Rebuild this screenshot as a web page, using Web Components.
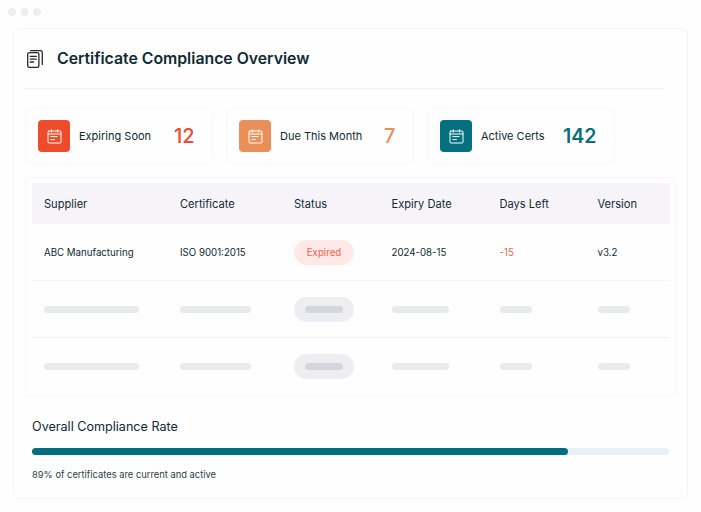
<!DOCTYPE html>
<html>
<head>
<meta charset="utf-8">
<title>Certificate Compliance Overview</title>
<style>
  html, body { margin: 0; background: #fefefe; }
  body { font-family: Inter, "Liberation Sans", sans-serif; color: #0f2a33; }
</style>
</head>
<body>

<app-window>
  <cert-heading>Certificate Compliance Overview</cert-heading>
  <stat-row>
    <stat-card value="12" color="#ee4b2b">Expiring Soon</stat-card>
    <stat-card value="7" color="#ea8f57">Due This Month</stat-card>
    <stat-card value="142" color="#04707f" strong>Active Certs</stat-card>
  </stat-row>
  <cert-table>
    <data-row supplier="ABC Manufacturing" cert="ISO 9001:2015" status="Expired" expiry="2024-08-15" days="-15" version="v3.2"></data-row>
    <skeleton-row></skeleton-row>
    <skeleton-row last></skeleton-row>
  </cert-table>
  <compliance-bar percent="84.2" title="Overall Compliance Rate">89% of certificates are current and active</compliance-bar>
</app-window>

<script>
// column widths shared by the header and all rows
const COLUMNS = "136px 114px 97.5px 108px 98px 1fr";

//outer frame with the three dots and the big card
class AppWindow extends HTMLElement {
  constructor() {
    super();
    this.attachShadow({ mode: "open" });
    this.shadowRoot.innerHTML = `
    <style>
      :host { display: block; width: 701px; height: 512px; box-sizing: border-box; padding: 8px 13px 13px 8px; overflow: hidden; }
      .dots { display: flex; gap: 5px; height: 20px; }
      .dots i { width: 7.5px; height: 7.5px; border-radius: 50%; background: #eeeef0; }
      .card { box-sizing: border-box; height: 471px; margin-left: 5px; border: 1px solid #f6f4f8; border-radius: 6px; background: #fefefe; padding: 0 11px; }
    </style>
    <div class="dots"><i></i><i></i><i></i></div>
    <div class="card"><slot></slot></div>`;
  }
}

class CertHeading extends HTMLElement {
  constructor() {
    super();
    this.attachShadow({ mode: "open" });
    this.shadowRoot.innerHTML = `
    <style>
      :host { display: flex; align-items: center; gap: 14px; height: 60px; margin-right: 12px; padding: 0 0 0 2px; box-sizing: border-box; border-bottom: 1px solid #f1f0f4; font-size: 15.8px; font-weight: 600; color: #0f2a33; }
      svg { width: 16px; height: 18px; }
    </style>
    <svg viewBox="0 0 16 18" fill="none" stroke="#2a2a2a" stroke-width="1.3" stroke-linecap="round" stroke-linejoin="round">
      <rect x=".7" y="2.6" width="11.2" height="14.7" rx="1.6"/>
      <path d="M3.6 .7h10c1 0 1.7.7 1.7 1.7v12"/>
      <path d="M3.3 6.4h6M3.3 9.2h6M3.3 12h3.4"/>
    </svg>
    <span><slot></slot></span>`;
  }
}

class StatRow extends HTMLElement {
  constructor() {
    super();
    this.attachShadow({ mode: "open" });
    this.shadowRoot.innerHTML = `
    <style>:host { display: flex; gap: 13px; margin-top: 19px; }</style>
    <slot></slot>`;
  }
}

class StatCard extends HTMLElement {
  constructor() {
    super();
    this.attachShadow({ mode: "open" });
    const color = this.getAttribute("color");
    const strong = this.hasAttribute("strong");
    this.shadowRoot.innerHTML = `
    <style>
      :host { display: flex; align-items: center; box-sizing: border-box; width: 188px; height: 56px; padding: 0 17.5px 0 12px; border: 1px solid #f8f6fb; border-radius: 6px; }
      .icon { display: flex; align-items: center; justify-content: center; width: 32px; height: 32px; border-radius: 4px; background: ${color}; flex: none; }
      .label { margin-left: 9px; font-size: 11px; color: #0f2a33; white-space: nowrap; }
      .value { margin-left: auto; font-size: ${strong ? 19.5 : 20}px; font-weight: ${strong ? 600 : 500}; color: ${color}; }
    </style>
    <div class="icon">
      <svg width="15" height="15" viewBox="0 0 15 15" fill="none" stroke="#fff" stroke-width="1" stroke-linecap="round">
        <rect x="1" y="2" width="13" height="12" rx="1"/>
        <path d="M1 5h13M4.4 .8v2.4M10.6 .8v2.4M3.8 7.6h6.4M3.8 10.6h3.6"/>
      </svg>
    </div>
    <span class="label"><slot></slot></span>
    <span class="value">${this.getAttribute("value")}</span>`;
  }
}

class CertTable extends HTMLElement {
  constructor() {
    super();
    this.attachShadow({ mode: "open" });
    this.shadowRoot.innerHTML = `
    <style>
      :host { display: block; box-sizing: border-box; width: 651px; height: 220px; margin-top: 13px; padding: 5px 5px 0 6px; border: 1px solid #f8f6fb; border-radius: 4px; }
      .head { display: grid; grid-template-columns: ${COLUMNS}; align-items: center; height: 41px; padding-left: 12px; background: #f7f4f9; font-size: 11.1px; font-weight: 400; color: #0f2a33; }
    </style>
    <div class="head">
      <span>Supplier</span><span>Certificate</span><span>Status</span><span>Expiry Date</span><span>Days Left</span><span>Version</span>
    </div>
    <slot></slot>`;
  }
}

class DataRow extends HTMLElement {
  constructor() {
    super();
    this.attachShadow({ mode: "open" });
    const a = (n) => this.getAttribute(n);
    this.shadowRoot.innerHTML = `
    <style>
      :host { display: grid; grid-template-columns: ${COLUMNS}; align-items: center; height: 57px; box-sizing: border-box; padding: 1px 0 0 12px; border-bottom: 1px solid #f5f5f7; font-size: 9.7px; font-weight: 400; color: #0f2a33; }
      .pill { display: flex; align-items: center; justify-content: center; width: 60px; height: 25px; margin-top: -1px; border-radius: 13px; background: #fee9e7; color: #f0614a; }
      .late { color: #f0614a; }
    </style>
    <span>${a("supplier")}</span>
    <span>${a("cert")}</span>
    <span><div class="pill">${a("status")}</div></span>
    <span>${a("expiry")}</span>
    <span class="late">${a("days")}</span>
    <span>${a("version")}</span>`;
  }
}

//grey loading placeholder row
class SkeletonRow extends HTMLElement {
  constructor() {
    super();
    this.attachShadow({ mode: "open" });
    const bar = (w) => `<span class="bar" style="width:${w}px"></span>`;
    this.shadowRoot.innerHTML = `
    <style>
      :host { display: grid; grid-template-columns: ${COLUMNS}; align-items: center; height: 57px; box-sizing: border-box; padding-left: 12px; border-bottom: 1px solid #f0f0f2; }
      :host([last]) { border-bottom: none; }
      .bar { display: block; height: 7px; border-radius: 4px; background: #e8ebec; }
      .pill { display: flex; align-items: center; justify-content: center; width: 60px; height: 25px; border-radius: 13px; background: #eeeef2; }
      .pill .bar { background: #d5d6dc; }
    </style>
    ${bar(95)}${bar(71)}
    <span class="pill">${bar(38)}</span>
    ${bar(57)}${bar(32)}${bar(32)}`;
  }
}

class ComplianceBar extends HTMLElement {
  constructor() {
    super();
    this.attachShadow({ mode: "open" });
    this.shadowRoot.innerHTML = `
    <style>
      :host { display: block; margin: 22px 7px 0 7px; }
      .title { font-size: 12.6px; font-weight: 400; line-height: 16px; color: #0f2a33; }
      .track { height: 7px; margin-top: 13px; border-radius: 4px; background: #e9f1f4; }
      .fill { height: 100%; border-radius: 4px; background: #04707f; width: ${this.getAttribute("percent")}%; }
      .note { margin-top: 14px; font-size: 9.35px; line-height: 12px; color: #2b4049; }
    </style>
    <div class="title">${this.getAttribute("title")}</div>
    <div class="track"><div class="fill"></div></div>
    <div class="note"><slot></slot></div>`;
  }
}

//Register custom elements with the browser
customElements.define("app-window", AppWindow);
customElements.define("cert-heading", CertHeading);
customElements.define("stat-row", StatRow);
customElements.define("stat-card", StatCard);
customElements.define("cert-table", CertTable);
customElements.define("data-row", DataRow);
customElements.define("skeleton-row", SkeletonRow);
customElements.define("compliance-bar", ComplianceBar);
</script>
</body>
</html>
